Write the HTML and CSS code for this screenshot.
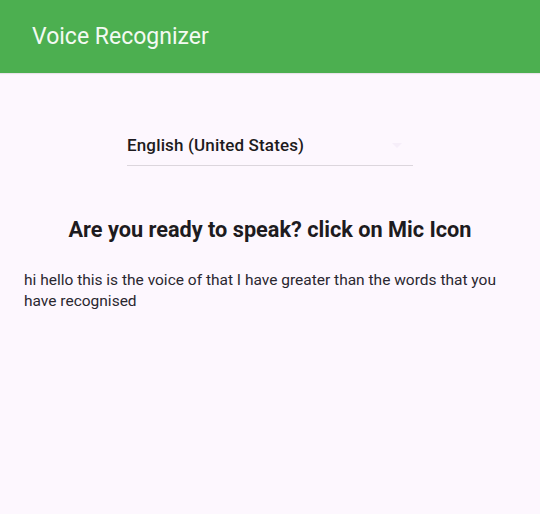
FILE: index.html
```html
<!DOCTYPE html>
<html>
<head>
<meta charset="utf-8">
<link rel="stylesheet" href="styles.css">
</head>
<body>
<header class="appbar">
  <h1 class="title">Voice Recognizer</h1>
</header>
<main class="content">
  <div class="dropdown-wrap">
    <div class="dropdown">
      <span class="dropdown-value">English (United States)</span>
      <svg class="arrow" width="24" height="24" viewBox="0 0 24 24"><path d="M7 10l5 5 5-5z" fill="#f6eef9"/></svg>
    </div>
  </div>
  <h2 class="heading">Are you ready to speak? click on Mic Icon</h2>
  <p class="result">hi hello this is the voice of that I have greater than the words that you have recognised</p>
</main>
</body>
</html>
```
FILE: styles.css
```css
html, body {
  margin: 0;
  padding: 0;
}
body {
  width: 540px;
  height: 514px;
  background: #fdf7fe;
  font-family: Roboto, "Noto Sans", sans-serif;
  overflow: hidden;
}
.appbar {
  height: 73px;
  background: #4caf50;
  display: flex;
  align-items: center;
  padding: 0 32px;
  box-shadow: 0 1px 1px rgba(0,0,0,0.08);
}
.title {
  margin: 0;
  font-size: 23px;
  font-weight: 400;
  color: #f3faf2;
  letter-spacing: 0;
}
.content {
  display: flex;
  flex-direction: column;
  padding: 0 24px;
}
.dropdown-wrap {
  display: flex;
  justify-content: center;
  padding-top: 56px;
}
.dropdown {
  width: 286px;
  height: 37px;
  display: flex;
  align-items: center;
  justify-content: space-between;
  border-bottom: 1px solid #dcd6dd;
  box-sizing: border-box;
  padding-bottom: 4px;
}
.dropdown-value {
  font-size: 17px;
  font-weight: 500;
  letter-spacing: 0.15px;
  color: #1d1b20;
}
.arrow {
  margin-right: 4px;
}
.heading {
  margin: 50px 0 0;
  text-align: center;
  font-size: 21.7px;
  line-height: 28px;
  font-weight: 700;
  color: #1d1b20;
}
.result {
  margin: 26px 0 0;
  font-size: 15.5px;
  line-height: 20.5px;
  color: #2a2730;
}
```
